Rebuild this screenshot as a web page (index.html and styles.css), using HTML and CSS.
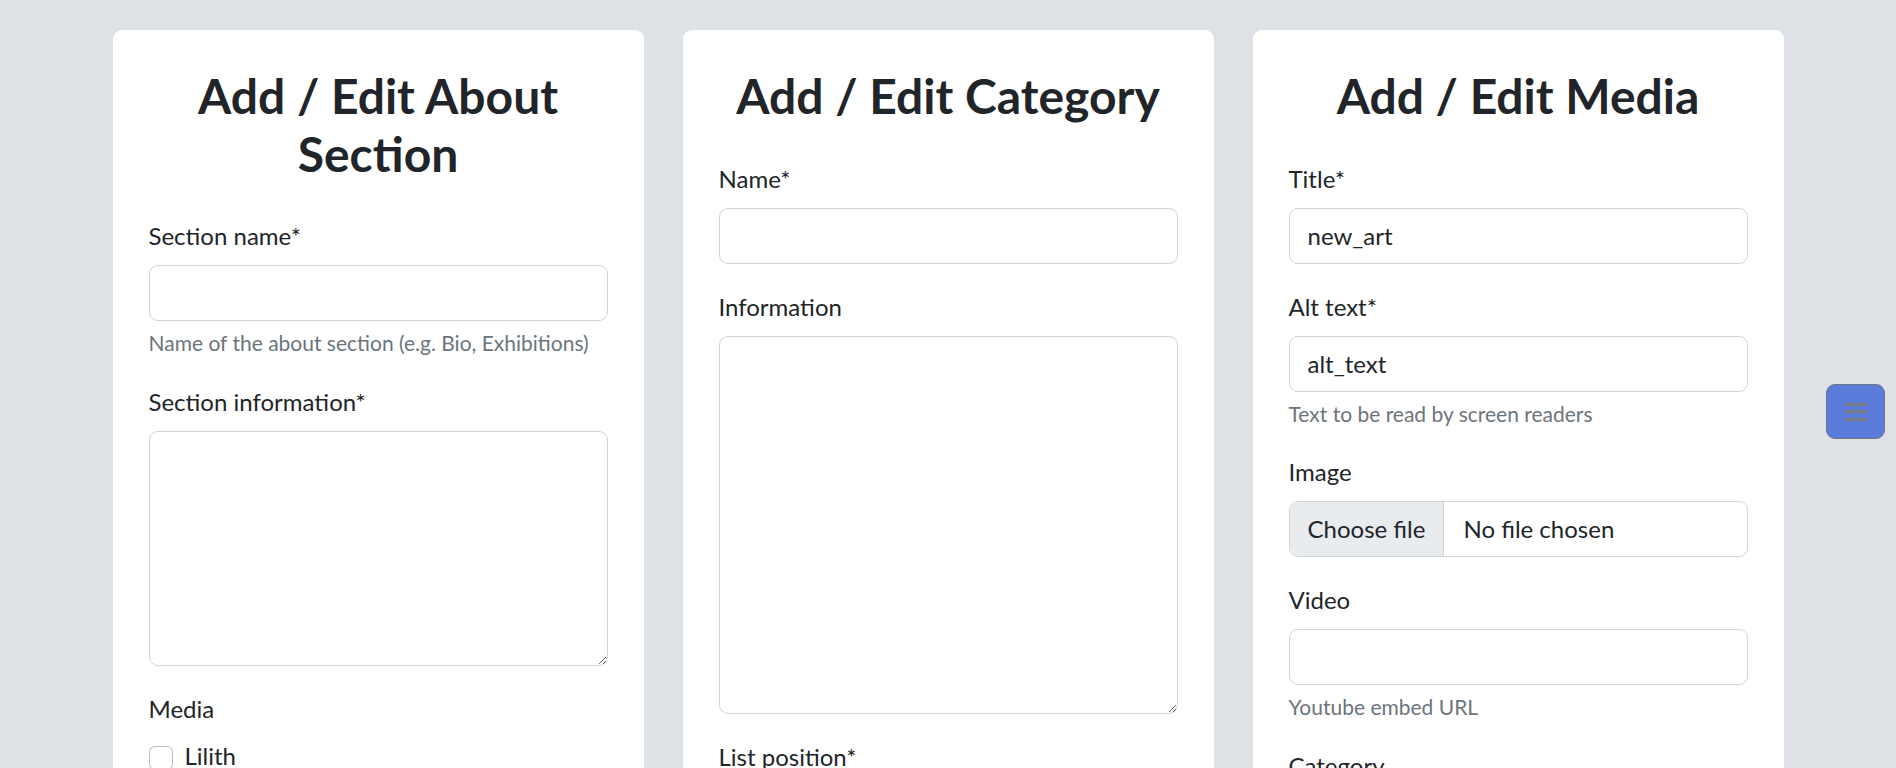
FILE: index.html
```html
<!DOCTYPE html>
<html lang="en">
<head>
<meta charset="utf-8">
<title>Admin</title>
<link rel="stylesheet" href="styles.css">
</head>
<body>
<main class="cards">
  <section class="card">
    <h2 class="card-title">Add / Edit About Section</h2>
    <div class="field">
      <label class="label">Section name*</label>
      <input class="control" type="text">
      <div class="help">Name of the about section (e.g. Bio, Exhibitions)</div>
    </div>
    <div class="field">
      <label class="label">Section information*</label>
      <textarea class="control area area-short"></textarea>
    </div>
    <div class="field">
      <label class="label">Media</label>
      <div class="check"><span class="box"></span><span>Lilith</span></div>
      <div class="check"><span class="box"></span><span>new_art</span></div>
    </div>
  </section>

  <section class="card">
    <h2 class="card-title">Add / Edit Category</h2>
    <div class="field">
      <label class="label">Name*</label>
      <input class="control" type="text">
    </div>
    <div class="field">
      <label class="label">Information</label>
      <textarea class="control area area-tall"></textarea>
    </div>
    <div class="field">
      <label class="label">List position*</label>
      <input class="control" type="text">
    </div>
  </section>

  <section class="card">
    <h2 class="card-title">Add / Edit Media</h2>
    <div class="field">
      <label class="label">Title*</label>
      <input class="control" type="text" value="new_art">
    </div>
    <div class="field">
      <label class="label">Alt text*</label>
      <input class="control" type="text" value="alt_text">
      <div class="help">Text to be read by screen readers</div>
    </div>
    <div class="field">
      <label class="label">Image</label>
      <div class="control file"><span class="file-btn">Choose file</span><span class="file-name">No file chosen</span></div>
    </div>
    <div class="field">
      <label class="label">Video</label>
      <input class="control" type="text">
      <div class="help">Youtube embed URL</div>
    </div>
    <div class="field">
      <label class="label">Category</label>
      <input class="control" type="text">
    </div>
  </section>
</main>

<button class="menu-btn" type="button" aria-label="Menu">
  <span class="bar"></span><span class="bar"></span><span class="bar"></span>
</button>
</body>
</html>
```

FILE: styles.css
```css
html {
  overflow: hidden;
}

body {
  margin: 0;
  background: #dee2e6;
  font-family: Lato, "Liberation Sans", sans-serif;
  font-size: 24px;
  line-height: 1.5;
  color: #212529;
}

.cards {
  width: 1671px;
  margin: 0 auto;
  padding-top: 30px;
  display: flex;
  gap: 39px;
  align-items: flex-start;
}

.card {
  flex: 1;
  background: #fff;
  border-radius: 9px;
  padding: 37px 36px 36px;
}

.card-title {
  margin: 0 0 35px;
  font-size: 48px;
  line-height: 57.6px;
  font-weight: 700;
  text-align: center;
}

.field {
  margin-bottom: 24px;
}

.label {
  display: block;
  padding-top: 1px;
  margin-bottom: 11px;
  line-height: 36px;
}

.control {
  display: block;
  box-sizing: border-box;
  width: 100%;
  height: 56px;
  padding: 9px 18px;
  border: 1px solid #ced4da;
  border-radius: 9px;
  background: #fff;
  font-family: inherit;
  font-size: 24px;
  line-height: 36px;
  color: #212529;
  outline: none;
}

.area {
  resize: vertical;
}

.area-short {
  height: 235px;
}

.area-tall {
  height: 378px;
}

.help {
  margin-top: 6px;
  font-size: 21px;
  line-height: 31.5px;
  color: #6c757d;
}

.check {
  display: flex;
  align-items: flex-start;
  gap: 12px;
  min-height: 36px;
  margin-bottom: 3px;
  line-height: 36px;
}

.box {
  flex: none;
  box-sizing: border-box;
  width: 24px;
  height: 24px;
  margin-top: 8px;
  border: 1px solid rgba(0, 0, 0, 0.25);
  border-radius: 6px;
  background: #fff;
}

.file {
  display: flex;
  padding: 0;
  overflow: hidden;
}

.file-btn {
  display: flex;
  align-items: center;
  padding: 0 18px;
  background: #e9ecef;
  border-right: 1px solid #ced4da;
}

.file-name {
  display: flex;
  align-items: center;
  padding: 0 19px;
}

.menu-btn {
  position: fixed;
  top: 384px;
  right: 11px;
  width: 59px;
  height: 55px;
  padding: 0;
  box-sizing: border-box;
  background: #5a7bda;
  border: 1.5px solid #6f7680;
  border-radius: 9px;
  display: flex;
  flex-direction: column;
  align-items: center;
  justify-content: center;
  gap: 4.5px;
}

.bar {
  display: block;
  width: 22px;
  height: 3px;
  background: #777b80;
}
```
